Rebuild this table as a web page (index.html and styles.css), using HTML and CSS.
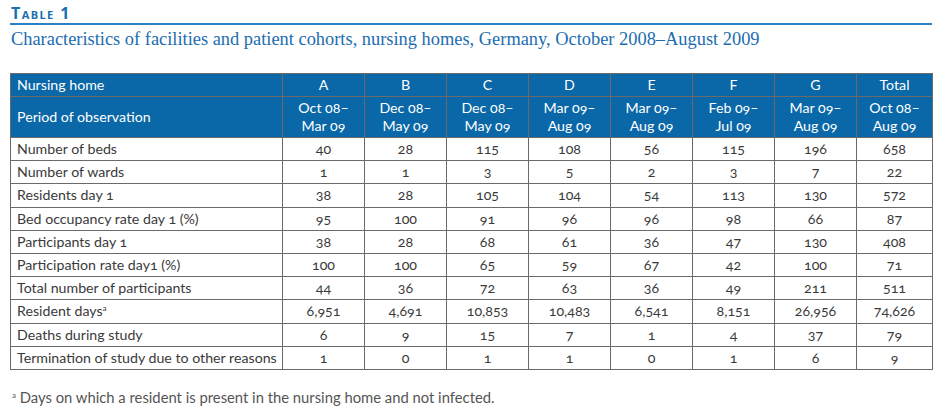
FILE: index.html
```html
<!DOCTYPE html>
<html>
<head>
<meta charset="utf-8">
<link rel="stylesheet" href="styles.css">
</head>
<body>
<div class="page">
  <div class="label">Table 1</div>
  <div class="caption">Characteristics of facilities and patient cohorts, nursing homes, Germany, October 2008–August 2009</div>
  <table class="data">
    <colgroup>
      <col class="c-name"><col class="c-num"><col class="c-num"><col class="c-num"><col class="c-num"><col class="c-num"><col class="c-num"><col class="c-num"><col class="c-total">
    </colgroup>
    <thead>
      <tr class="h1"><th class="name">Nursing home</th><th>A</th><th>B</th><th>C</th><th>D</th><th>E</th><th>F</th><th>G</th><th>Total</th></tr>
      <tr class="h2"><th class="name">Period of observation</th><th>Oct 08–<br>Mar 09</th><th>Dec 08–<br>May 09</th><th>Dec 08–<br>May 09</th><th>Mar 09–<br>Aug 09</th><th>Mar 09–<br>Aug 09</th><th>Feb 09–<br>Jul 09</th><th>Mar 09–<br>Aug 09</th><th>Oct 08–<br>Aug 09</th></tr>
    </thead>
    <tbody>
      <tr><td class="name">Number of beds</td><td>40</td><td>28</td><td>115</td><td>108</td><td>56</td><td>115</td><td>196</td><td>658</td></tr>
      <tr><td class="name">Number of wards</td><td>1</td><td>1</td><td>3</td><td>5</td><td>2</td><td>3</td><td>7</td><td>22</td></tr>
      <tr><td class="name">Residents day 1</td><td>38</td><td>28</td><td>105</td><td>104</td><td>54</td><td>113</td><td>130</td><td>572</td></tr>
      <tr><td class="name">Bed occupancy rate day 1 (%)</td><td>95</td><td>100</td><td>91</td><td>96</td><td>96</td><td>98</td><td>66</td><td>87</td></tr>
      <tr><td class="name">Participants day 1</td><td>38</td><td>28</td><td>68</td><td>61</td><td>36</td><td>47</td><td>130</td><td>408</td></tr>
      <tr><td class="name">Participation rate day1 (%)</td><td>100</td><td>100</td><td>65</td><td>59</td><td>67</td><td>42</td><td>100</td><td>71</td></tr>
      <tr><td class="name">Total number of participants</td><td>44</td><td>36</td><td>72</td><td>63</td><td>36</td><td>49</td><td>211</td><td>511</td></tr>
      <tr><td class="name">Resident days<sup>a</sup></td><td>6,951</td><td>4,691</td><td>10,853</td><td>10,483</td><td>6,541</td><td>8,151</td><td>26,956</td><td>74,626</td></tr>
      <tr><td class="name">Deaths during study</td><td>6</td><td>9</td><td>15</td><td>7</td><td>1</td><td>4</td><td>37</td><td>79</td></tr>
      <tr><td class="name">Termination of study due to other reasons</td><td>1</td><td>0</td><td>1</td><td>1</td><td>0</td><td>1</td><td>6</td><td>9</td></tr>
    </tbody>
  </table>
  <p class="note"><sup>a</sup> Days on which a resident is present in the nursing home and not infected.</p>
</div>
</body>
</html>
```
FILE: styles.css
```css
html, body {
  margin: 0;
  padding: 0;
  background: #ffffff;
}
.page {
  padding: 4px 9px 0 10px;
  width: 922px;
}
.label {
  font-family: "Open Sans", sans-serif;
  font-weight: 700;
  font-variant: small-caps;
  font-size: 16px;
  line-height: 19px;
  color: #1a6fb0;
  letter-spacing: 1.4px;
  padding-left: 1px;
  border-bottom: 2px solid #2a80c2;
}
.caption {
  font-family: "Liberation Serif", serif;
  font-size: 18.4px;
  line-height: 22px;
  color: #1b6db0;
  padding-left: 1px;
  margin-top: 3px;
}
.data {
  margin-top: 23px;
  border-collapse: collapse;
  width: 922px;
  table-layout: fixed;
  font-family: "Lato", sans-serif;
  font-variant-numeric: oldstyle-nums;
  font-size: 14.2px;
  color: #3a3a3a;
  border: 1px solid #6a6a6a;
}
.c-name { width: 272px; }
.c-num { width: 82px; }
.c-total { width: 76px; }
.data th, .data td {
  border: 1px solid #6a6a6a;
  padding: 0;
  text-align: center;
  font-weight: 400;
}
.data th {
  background: #0a68a8;
  color: #ffffff;
  line-height: 18px;
}
.data .name {
  text-align: left;
  padding-left: 6px;
}
.h1 th { height: 22px; }
.h2 th { height: 40px; }
.data td { height: 22.2px; line-height: 18px; }
sup {
  font-size: 8px;
  vertical-align: 5px;
  line-height: 0;
}
.note {
  margin: 18px 0 0 2px;
  font-family: "Lato", sans-serif;
  font-size: 14.8px;
  color: #555555;
}
```
